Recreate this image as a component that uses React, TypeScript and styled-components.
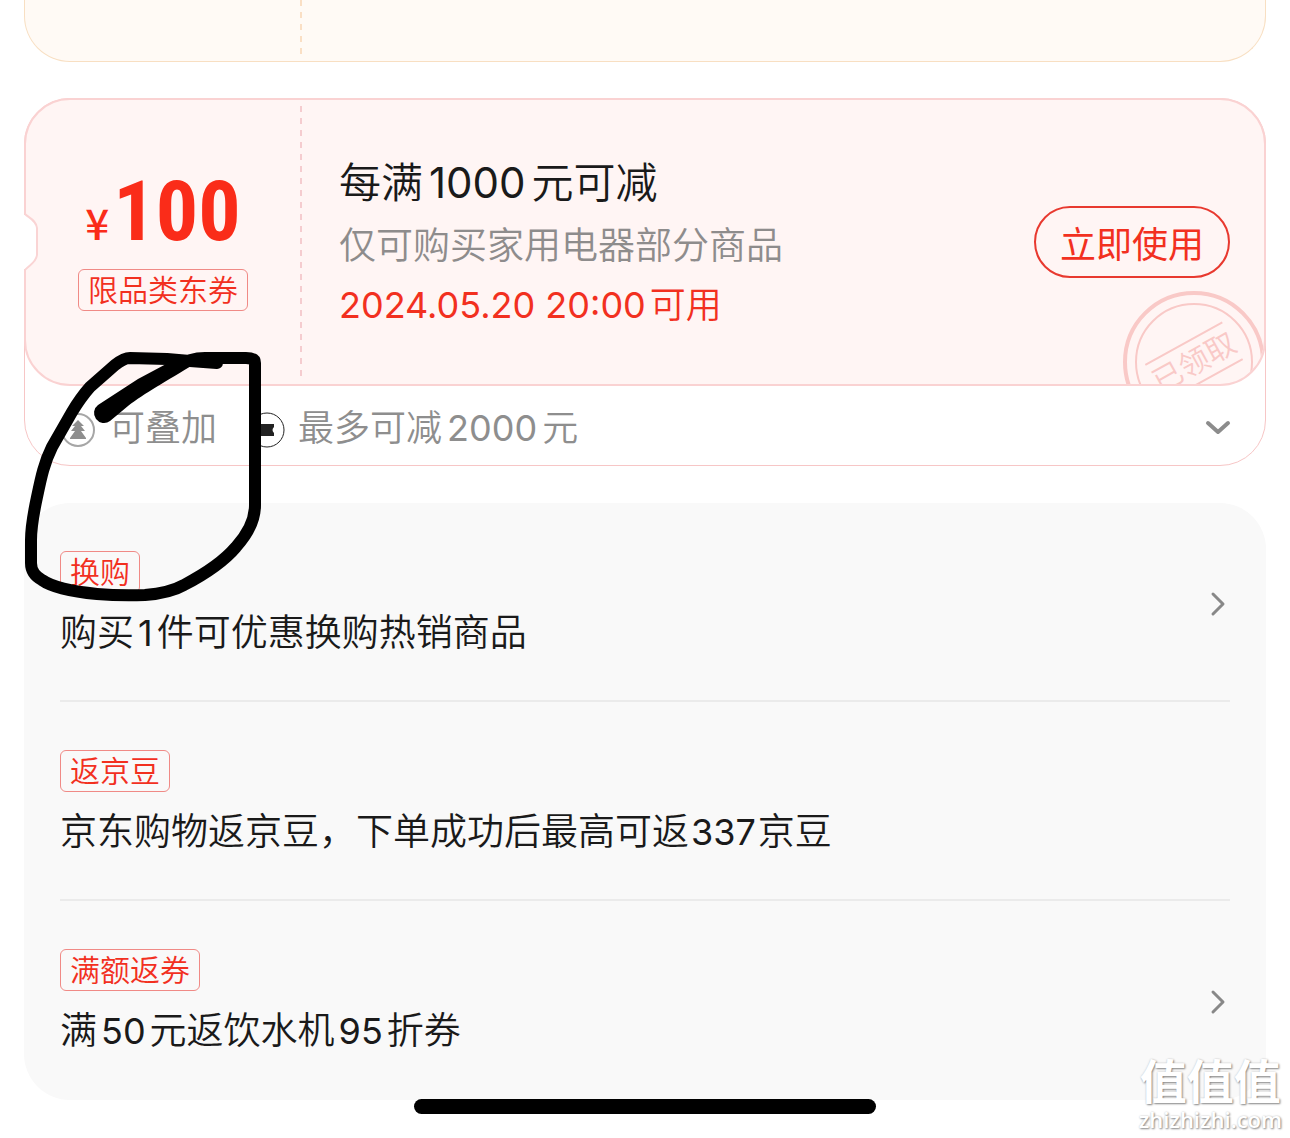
import React from 'react';
import styled, { createGlobalStyle } from 'styled-components';

const cjk = `'Noto Sans CJK SC', sans-serif`;

const Global = createGlobalStyle`
  *, *::before, *::after { box-sizing: border-box; }
  body { margin: 0; background: #fff; color: #1a1a1a; font-family: ${cjk}; font-weight: 350; }
  h2, p, ul { margin: 0; padding: 0; font-weight: 350; }
`;

const Page = styled.main`
  position: relative;
  padding: 0 24px 38px;
  overflow: hidden;
`;

const PreviousCoupon = styled.div`
  height: 62px;
  padding-left: 276px;
  background: #fffaf5;
  border: 1px solid #f8dfc2;
  border-top: 0;
  border-radius: 0 0 46px 46px;
`;

const Dashes = styled.div<{ $color: string }>`
  width: 2px;
  background: repeating-linear-gradient(to bottom, ${p => p.$color} 0 6px, transparent 6px 12px);
`;

const PreviousDashes = styled(Dashes)`
  height: 54px;
  margin-left: -1px;
`;

const Coupon = styled.article`
  margin-top: 36px;
  border: 1px solid #f7c6c6;
  border-radius: 46px;
`;

const TicketFrame = styled.div`
  position: relative;
  margin: -1px;
`;

const Ticket = styled.section`
  position: relative;
  display: flex;
  height: 288px;
  padding: 6px 34px 4px 0;
  background: #fff5f4;
  border: 2px solid #fad2d2;
  border-radius: 46px;
  overflow: hidden;
`;

const Notch = styled.svg`
  position: absolute;
  left: 0;
  top: 115px;
`;

const Stamp = styled.svg`
  position: absolute;
  right: -4px;
  top: 188px;
`;

const Value = styled.div`
  display: flex;
  flex-direction: column;
  align-items: center;
  width: 274px;
  padding-top: 62px;
`;

const Amount = styled.div`
  display: flex;
  align-items: baseline;
  gap: 4px;
  height: 101px;
  color: #fa2c19;
  font: 700 84px/88px 'Roboto Condensed', Roboto, sans-serif;
`;

const Currency = styled.span`
  font: 500 42px/42px ${cjk};
`;

const Tag = styled.span`
  display: inline-block;
  height: 42px;
  padding: 0 9px;
  border: 1px solid #f08a86;
  border-radius: 6px;
  color: #f2301f;
  font-size: 30px;
  line-height: 36px;
`;

const Details = styled.div`
  flex: 1;
  padding: 41px 0 0 37px;
`;

const Title = styled.h2`
  font-size: 42px;
  line-height: 66px;
`;

const Scope = styled.p`
  color: #8e8c8c;
  font-size: 37px;
  line-height: 60px;
`;

const Validity = styled.p`
  color: #f2301f;
  font-size: 36px;
  line-height: 58px;
`;

const Num = styled.span<{ $gap?: number }>`
  margin: 0 ${p => p.$gap ?? 4}px;
  font-family: Inter, sans-serif;
  font-weight: 400;
  line-height: 1;
`;

const LeadNum = styled(Num)`
  margin-left: 0;
`;

const UseButton = styled.button`
  align-self: flex-start;
  width: 196px;
  height: 72px;
  margin-top: 100px;
  padding: 0;
  background: transparent;
  border: 2px solid #e8392f;
  border-radius: 36px;
  color: #f2301f;
  font: 400 36px/64px ${cjk};
`;

const Extras = styled.div`
  display: flex;
  align-items: center;
  height: 80px;
  padding: 0 34px 0 35px;
  color: #8e8e8e;
  font-size: 36px;
  line-height: 80px;
`;

const ExtraItem = styled.span`
  display: flex;
  align-items: center;
  gap: 13px;
  margin-right: 32px;
`;

const ExtraIcon = styled.svg`
  margin-top: 10px;
`;

const Expand = styled.button`
  display: flex;
  margin-left: auto;
  padding: 6px 0 0;
  background: none;
  border: 0;
`;

const Promotions = styled.ul`
  margin-top: 37px;
  padding: 0 36px 2px;
  background: #f9f9f9;
  border-radius: 46px;
  list-style: none;
`;

const Promotion = styled.li`
  display: flex;
  align-items: center;
  justify-content: space-between;
  padding: 48px 0 44px;

  & + & {
    border-top: 2px solid #ebebeb;
  }
`;

const PromotionBody = styled.div`
  display: flex;
  flex-direction: column;
  align-items: flex-start;
`;

const PromotionText = styled.p`
  margin-top: 11px;
  font-size: 37px;
  line-height: 52px;

  ${Num} {
    font-size: 36px;
  }
`;

const Arrow = styled.svg`
  margin-right: 4px;
`;

const Scribble = styled.svg`
  position: absolute;
  left: 0;
  top: 340px;
  pointer-events: none;
`;

const HomeIndicator = styled.div`
  position: absolute;
  bottom: 24px;
  left: 50%;
  width: 462px;
  height: 15px;
  border-radius: 8px;
  background: #000;
  transform: translateX(-50%);
`;

const Watermark = styled.div`
  position: absolute;
  right: 8px;
  bottom: 6px;
  color: #fff;
  text-align: center;
  text-shadow: 1px 1px 2px #888, 0 0 2px #ccc;
`;

const WatermarkName = styled.div`
  font: 700 47px/54px ${cjk};
`;

const WatermarkSite = styled.div`
  font: 600 22px/26px 'Open Sans', sans-serif;
`;

const RightArrow = () => (
  <Arrow width="16" height="26" viewBox="0 0 16 26" fill="none" stroke="#888" strokeWidth="3" strokeLinecap="round" strokeLinejoin="round">
    <path d="M3 3l10 10L3 23" />
  </Arrow>
);

const promotions = [
  { tag: '换购', text: <>购买<Num>1</Num>件可优惠换购热销商品</>, arrow: true },
  { tag: '返京豆', text: <>京东购物返京豆，下单成功后最高可返<Num $gap={2}>337</Num>京豆</>, arrow: false },
  { tag: '满额返券', text: <>满<Num>50</Num>元返饮水机<Num>95</Num>折券</>, arrow: true },
];

export default function App() {
  return (
    <Page>
      <Global />
      <PreviousCoupon>
        <PreviousDashes $color="#fadfc4" />
      </PreviousCoupon>

      <Coupon>
        <TicketFrame>
          <Ticket>
            <Value>
              <Amount><Currency>¥</Currency>100</Amount>
              <Tag>限品类东券</Tag>
            </Value>
            <Dashes $color="#f5cccf" />
            <Details>
              <Title>每满<Num $gap={6}>1000</Num>元可减</Title>
              <Scope>仅可购买家用电器部分商品</Scope>
              <Validity><LeadNum>2024.05.20 20:00</LeadNum>可用</Validity>
            </Details>
            <UseButton type="button">立即使用</UseButton>
            <Stamp width="148" height="148" viewBox="-74 -74 148 148" fill="none" stroke="#f9c9c7">
              <circle r="69" strokeWidth="4" />
              <circle r="58" strokeWidth="2" />
              <g transform="rotate(-29)">
                <path d="M-44 -21H44M-44 21H44" strokeWidth="2" />
                <text y="11" textAnchor="middle" fontSize="30" fill="#f9c9c7" stroke="none">已领取</text>
              </g>
            </Stamp>
          </Ticket>
          <Notch width="16" height="58" viewBox="0 0 16 58">
            <path d="M0 2H1C5 4 12 8 13 15V42C12 49 5 53 1 56H0Z" fill="#fff" />
            <path d="M1 1C5 5 12 7 13 15V42C12 50 5 52 1 57" fill="none" stroke="#fad4d4" strokeWidth="2" />
          </Notch>
        </TicketFrame>
        <Extras>
          <ExtraItem>
            <ExtraIcon width="36" height="36" viewBox="0 0 36 36">
              <circle cx="18" cy="18" r="16" fill="none" stroke="#a6a6a6" strokeWidth="2" />
              <path d="M18 8l6 6h-3l4 5h-4l5 7v1H10v-1l5-7h-4l4-5h-3z" fill="#8e8e8e" />
            </ExtraIcon>
            可叠加
          </ExtraItem>
          <ExtraItem>
            <ExtraIcon width="36" height="36" viewBox="0 0 36 36">
              <circle cx="18" cy="18" r="17" fill="none" stroke="#222" />
              <path d="M10 12H25V15Q22 18 25 21V24H10V21Q14 18 10 15Z" fill="#222" />
            </ExtraIcon>
            <span>最多可减<Num $gap={5}>2000</Num>元</span>
          </ExtraItem>
          <Expand type="button" aria-label="展开">
            <svg width="26" height="16" viewBox="0 0 26 16" fill="none" stroke="#8c8c8c" strokeWidth="4" strokeLinecap="round" strokeLinejoin="round">
              <path d="M3 3l10 9L23 3" />
            </svg>
          </Expand>
        </Extras>
      </Coupon>

      <Promotions>
        {promotions.map(item => (
          <Promotion key={item.tag}>
            <PromotionBody>
              <Tag>{item.tag}</Tag>
              <PromotionText>{item.text}</PromotionText>
            </PromotionBody>
            {item.arrow && <RightArrow />}
          </Promotion>
        ))}
      </Promotions>

      <Scribble width="280" height="270" viewBox="0 340 280 270">
        <path
          d="M217 363L190 361L167 359L130 358Q124 358 115 365L90 387C82 396 78 402 72 412L52 447C44 463 41 478 37 497Q31 525 31 540V563Q31 574 42 580Q56 590 97 594Q120 596 145 595Q170 593 184 585C205 574 225 560 236 547Q255 526 255 505V363Q255 358 246 358H205Q190 358 173 367"
          fill="none" stroke="#000" strokeWidth="12" strokeLinecap="round" strokeLinejoin="round"
        />
        <path d="M192 355L168 363L138 379L98 405A9 9 0 0 0 110 421L128 406C145 393 165 382 196 363Z" fill="#000" />
      </Scribble>
      <HomeIndicator />
      <Watermark>
        <WatermarkName>值值值</WatermarkName>
        <WatermarkSite>zhizhizhi.com</WatermarkSite>
      </Watermark>
    </Page>
  );
}
